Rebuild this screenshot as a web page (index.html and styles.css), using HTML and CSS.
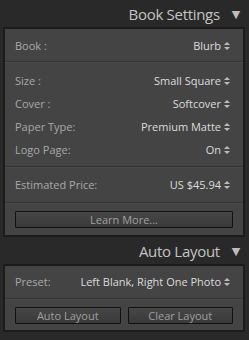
FILE: index.html
```html
<!DOCTYPE html>
<html lang="en">
  <head>
    <meta charset="UTF-8" />
    <title>Book Settings</title>
    <link rel="stylesheet" href="styles.css">
  </head>
  <body>
    <div class="panel-head">
      <span class="title">Book Settings</span>
      <span class="tri">▼</span>
    </div>
    <div class="panel">
      <div class="section sec-book">
        <div class="row"><span class="label">Book :</span><span class="value">Blurb <i class="spin"></i></span></div>
      </div>
      <div class="section sec-opts">
        <div class="row"><span class="label">Size :</span><span class="value">Small Square <i class="spin"></i></span></div>
        <div class="row"><span class="label">Cover :</span><span class="value">Softcover <i class="spin"></i></span></div>
        <div class="row"><span class="label">Paper Type:</span><span class="value">Premium Matte <i class="spin"></i></span></div>
        <div class="row"><span class="label">Logo Page:</span><span class="value">On <i class="spin"></i></span></div>
      </div>
      <div class="section sec-price">
        <div class="row"><span class="label">Estimated Price:</span><span class="value">US $45.94 <i class="spin"></i></span></div>
      </div>
      <div class="section sec-btns">
        <button type="button" class="btn wide">Learn More...</button>
      </div>
    </div>
    <div class="panel-head">
      <span class="title">Auto Layout</span>
      <span class="tri">▼</span>
    </div>
    <div class="panel">
      <div class="section sec-preset">
        <div class="row"><span class="label">Preset:</span><span class="value">Left Blank, Right One Photo <i class="spin"></i></span></div>
      </div>
      <div class="section sec-btns two">
        <button type="button" class="btn">Auto Layout</button>
        <button type="button" class="btn">Clear Layout</button>
      </div>
    </div>
  </body>
</html>
```

FILE: styles.css
```css
body {
  margin: 0;
  background-color: #292929;
  font-family: "Open Sans", "DejaVu Sans", sans-serif;
  width: 249px;
  height: 340px;
  overflow: hidden;
}

.panel-head {
  height: 27px;
  display: flex;
  justify-content: flex-end;
  align-items: center;
  padding-right: 9px;
  color: #c4c4c4;
  font-size: 15px;
  letter-spacing: -0.3px;
}
.panel-head .tri {
  font-size: 11px;
  margin-left: 12px;
  color: #bdbdbd;
}

.panel {
  margin: 0 4px 0 3px;
  background-color: #444;
  border: 2px solid #1c1c1c;
}

.section {
  border-top: 1px solid #343434;
  box-shadow: inset 0 1px 0 #4c4c4c;
}
.section:first-child {
  border-top: none;
  box-shadow: none;
}

.row {
  height: 23px;
  display: flex;
  justify-content: space-between;
  align-items: center;
  padding: 0 13px 0 10px;
  font-size: 11px;
}
.label {
  color: #a9a9a9;
}
.value {
  color: #dcdcdc;
  display: flex;
  align-items: center;
}

.spin {
  display: inline-block;
  width: 6px;
  height: 8px;
  margin-left: 3px;
  position: relative;
}
.spin::before,
.spin::after {
  content: "";
  position: absolute;
  left: 0;
  border-left: 3px solid transparent;
  border-right: 3px solid transparent;
}
.spin::before {
  top: 0;
  border-bottom: 3px solid #bbb;
}
.spin::after {
  bottom: 0;
  border-top: 3px solid #bbb;
}

.sec-book {
  padding: 5px 0 4px;
}
.sec-opts {
  padding: 7px 0 5px;
}
.sec-price {
  padding: 6px 0 6px;
}
.sec-preset {
  padding: 4px 0 5px;
}

.sec-btns {
  padding: 8px 10px 7px 10px;
  display: flex;
  gap: 7px;
}
.btn {
  flex: 1;
  height: 17px;
  padding: 0;
  border: 1px solid #111;
  border-radius: 1px;
  background: linear-gradient(#474747, #393939);
  color: #a0a0a0;
  font-family: "Open Sans", "DejaVu Sans", sans-serif;
  font-size: 11px;
  line-height: 14px;
}
.sec-btns.two {
  padding-bottom: 6px;
}
```
